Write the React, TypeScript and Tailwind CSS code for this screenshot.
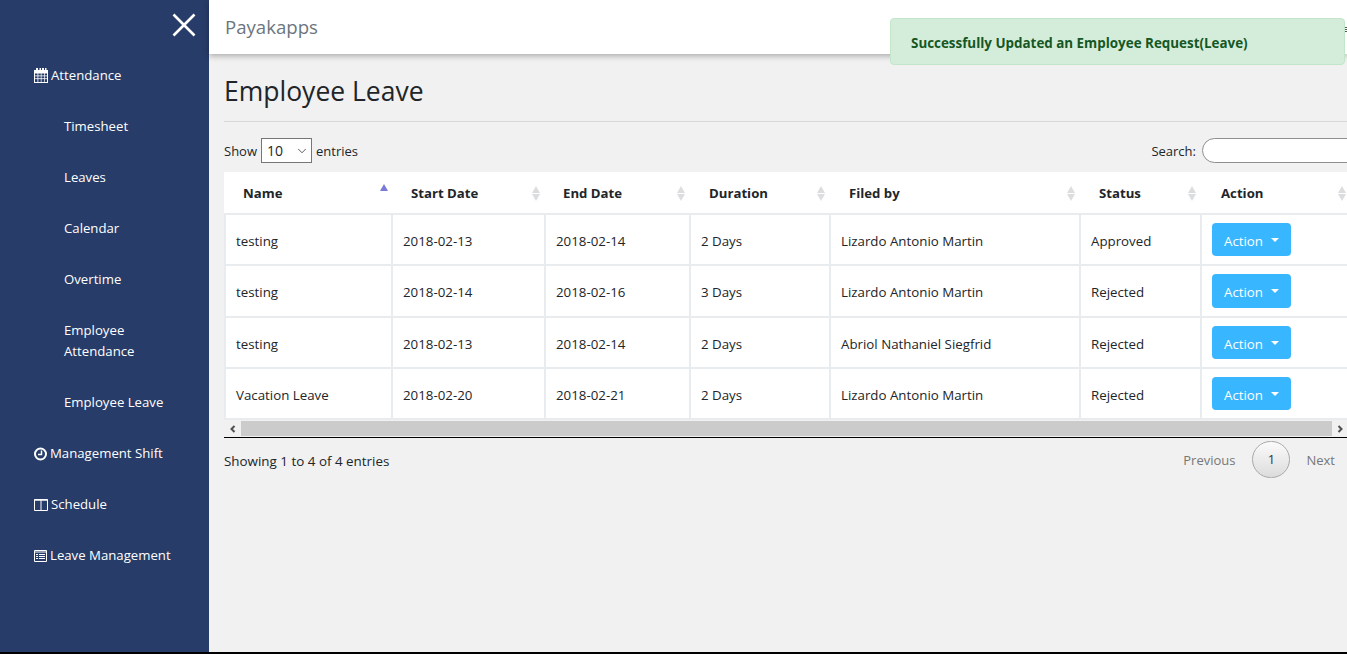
import { ChevronDown } from 'lucide-react';
import type { ReactNode } from 'react';

const FONT = "font-['Open_Sans','Noto_Sans',sans-serif]";

const COLUMNS = [
  { label: 'Name', width: 'w-[167px]', labelClass: 'pl-[18px] pr-[4px]' },
  { label: 'Start Date', width: 'w-[153px]', labelClass: 'pl-[19px] pr-[5px]' },
  { label: 'End Date', width: 'w-[145px]', labelClass: 'pl-[18px] pr-[5px]' },
  { label: 'Duration', width: 'w-[140px]', labelClass: 'pl-[19px] pr-[5px]' },
  { label: 'Filed by', width: 'w-[250px]', labelClass: 'pl-[19px] pr-[5px]' },
  { label: 'Status', width: 'w-[121px]', labelClass: 'pl-[19px] pr-[5px]' },
  { label: 'Action', width: 'w-[150px]', labelClass: 'pl-[20px] pr-[5px]' },
];

const ROWS = [
  { name: 'testing', start: '2018-02-13', end: '2018-02-14', duration: '2 Days', by: 'Lizardo Antonio Martin', status: 'Approved', height: 'h-[51px]', pad: 'pt-[5px]', btn: 'h-[33px]', btnText: 'pt-[5px]' },
  { name: 'testing', start: '2018-02-14', end: '2018-02-16', duration: '3 Days', by: 'Lizardo Antonio Martin', status: 'Rejected', height: 'h-[52px]', pad: 'pt-[3px]', btn: 'h-[34px]', btnText: 'pt-[3px]' },
  { name: 'testing', start: '2018-02-13', end: '2018-02-14', duration: '2 Days', by: 'Abriol Nathaniel Siegfrid', status: 'Rejected', height: 'h-[51px]', pad: 'pt-[5px]', btn: 'h-[33px]', btnText: 'pt-[5px]' },
  { name: 'Vacation Leave', start: '2018-02-20', end: '2018-02-21', duration: '2 Days', by: 'Lizardo Antonio Martin', status: 'Rejected', height: 'h-[51px]', pad: 'pt-[5px]', btn: 'h-[33px]', btnText: 'pt-[5px]' },
];

function CalendarIcon() {
  return (
    <svg width="14" height="15" viewBox="0 0 14 15" className="shrink-0" fill="currentColor">
      <path d="M0 2h2V0h2v2h1.500V0h1.500v2h1V0h2v2h1V0h1.500v2H14v13H0V2z" />
      <g fill="#273c68">
        <rect x="1" y="5.500" width="2.500" height="2" />
        <rect x="4.300" y="5.500" width="2.500" height="2" />
        <rect x="7.500" y="5.500" width="2.500" height="2" />
        <rect x="10.700" y="5.500" width="2.300" height="2" />
        <rect x="1" y="8.300" width="2.500" height="2" />
        <rect x="4.300" y="8.300" width="2.500" height="2" />
        <rect x="7.500" y="8.300" width="2.500" height="2" />
        <rect x="10.700" y="8.300" width="2.300" height="2" />
        <rect x="1" y="11.100" width="2.500" height="2.900" />
        <rect x="4.300" y="11.100" width="2.500" height="2.900" />
        <rect x="7.500" y="11.100" width="2.500" height="2.900" />
        <rect x="10.700" y="11.100" width="2.300" height="2.900" />
      </g>
    </svg>
  );
}

function ClockIcon() {
  return (
    <svg width="13" height="14" viewBox="0 0 13 14" className="shrink-0" fill="none" stroke="currentColor">
      <circle cx="6.500" cy="7" r="5.500" strokeWidth="2" />
      <path d="M7.500 3.500V7.500H4" strokeWidth="1.500" />
    </svg>
  );
}

function ColumnsIcon() {
  return (
    <svg width="14" height="14" viewBox="0 0 14 14" className="shrink-0" fill="none" stroke="currentColor">
      <path d="M0.500 1.500H13.500V12.500H0.500z M7 1.500V12.500" />
      <path d="M0.500 2H13.500" strokeWidth="1.500" />
    </svg>
  );
}

function ListAltIcon() {
  return (
    <svg width="13" height="14" viewBox="0 0 13 14" className="shrink-0" fill="none" stroke="currentColor">
      <path d="M0.500 1.500H12.500V12.500H0.500z" />
      <path d="M1 3H12M2 5.500H4M5 5.500H11M2 7.500H4M5 7.500H11M2 9.500H4M5 9.500H11" />
    </svg>
  );
}

function SortArrows() {
  return (
    <span className="flex flex-col gap-[1px]">
      <span className="h-0 w-0 border-x-[4px] border-b-[7px] border-x-transparent border-b-[#dcdddf]" />
      <span className="h-0 w-0 border-x-[4px] border-t-[7px] border-x-transparent border-t-[#dcdddf]" />
    </span>
  );
}

function NavItem({ icon, children, sub }: { icon?: ReactNode; children: ReactNode; sub?: boolean }) {
  return (
    <a
      className={`flex items-center gap-[3px] py-[15px] leading-[21px] text-white ${sub ? 'pl-[64px] pr-10' : 'pl-[34px]'}`}
    >
      {icon}
      <span>{children}</span>
    </a>
  );
}

export default function App() {
  return (
    <div className={`relative h-[654px] w-[1347px] overflow-hidden bg-black text-[13.3px] text-[#212529] ${FONT}`}>
      <div className="flex h-[652px] bg-[#f1f1f1]">
        <aside className="flex w-[209px] shrink-0 flex-col bg-[#273c68] text-[13.2px] text-white">
          <div className="flex h-[50px] justify-end pr-[13px] pt-[13px]">
            <svg width="24" height="24" viewBox="0 0 24 24" stroke="currentColor" strokeWidth="2.600" fill="none">
              <path d="M1.500 1.500L22.500 22.500M22.500 1.500L1.500 22.500" />
            </svg>
          </div>
          <NavItem icon={<CalendarIcon />}>Attendance</NavItem>
          <NavItem sub>Timesheet</NavItem>
          <NavItem sub>Leaves</NavItem>
          <NavItem sub>Calendar</NavItem>
          <NavItem sub>Overtime</NavItem>
          <NavItem sub>Employee Attendance</NavItem>
          <NavItem sub>Employee Leave</NavItem>
          <NavItem icon={<ClockIcon />}>Management Shift</NavItem>
          <NavItem icon={<ColumnsIcon />}>Schedule</NavItem>
          <NavItem icon={<ListAltIcon />}>Leave Management</NavItem>
        </aside>

        <main className="min-w-0 flex-1">
          <header className="flex h-[54px] items-center justify-between bg-white pl-4 text-[18.6px] text-[#6c757d] shadow-[0_2px_6px_rgba(0,0,0,0.3)]">
            Payakapps
            <span className="mb-[-4px] flex w-[3px] flex-col gap-[1px]">
              <span className="h-px bg-[#555]" />
              <span className="h-px bg-[#555]" />
              <span className="h-px bg-[#555]" />
            </span>
          </header>

          <div className="pl-[15px]">
            <h1 className="mt-[19px] text-[26.5px] leading-[36px] text-[#212529]">Employee Leave</h1>
            <div className="mt-[12px] border-t border-[#d8d8d8]" />

            <div className="mt-[15px] flex h-[27px] items-center justify-between">
              <div className="flex items-center gap-[3px]">
                <span className="pt-[2px] text-[13px]">Show</span>
                <div className="mx-px flex h-[25px] w-[51px] items-center justify-between border border-[#767676] bg-white pl-[5px] pr-[2px] text-[14px]">
                  10
                  <ChevronDown size={14} strokeWidth={1.500} className="text-[#444]" />
                </div>
                <span className="pt-[2px] text-[13px]">entries</span>
              </div>
              <div className="flex items-center gap-[6px]">
                <span className="pt-[2px] text-[13px]">Search:</span>
                <div className="-mr-[20px] h-[25px] w-[165px] rounded-[13px] border border-[#8f8f8f] bg-white" />
              </div>
            </div>

            <div className="mt-[8px] overflow-hidden">
              <table className="w-[1126px] table-fixed border-collapse bg-white">
                <thead>
                  <tr className="h-[42px] border-b-2 border-[#e9ecef]">
                    {COLUMNS.map((col, i) => (
                      <th key={col.label} className={`${col.width} p-0 text-left font-bold`}>
                        <div className={`flex items-center justify-between pt-[2px] ${col.labelClass}`}>
                          <span className="text-[13.2px]">{col.label}</span>
                          {i === 0 ? (
                            <span className="mb-[11px] h-0 w-0 border-x-[4px] border-b-[7px] border-x-transparent border-b-[#7a7ad8]" />
                          ) : (
                            <SortArrows />
                          )}
                        </div>
                      </th>
                    ))}
                  </tr>
                </thead>
                <tbody>
                  {ROWS.map((row, i) => (
                    <tr key={i} className={`${row.height} border-b-2 border-[#e9ecef]`}>
                      <td className={`border-x-2 border-[#e9ecef] pl-[10px] ${row.pad}`}>{row.name}</td>
                      <td className={`border-r-2 border-[#e9ecef] pl-[10px] ${row.pad}`}>{row.start}</td>
                      <td className={`border-r-2 border-[#e9ecef] pl-[10px] ${row.pad}`}>{row.end}</td>
                      <td className={`border-r-2 border-[#e9ecef] pl-[10px] ${row.pad}`}>{row.duration}</td>
                      <td className={`border-r-2 border-[#e9ecef] pl-[10px] ${row.pad}`}>{row.by}</td>
                      <td className={`border-r-2 border-[#e9ecef] pl-[10px] ${row.pad}`}>{row.status}</td>
                      <td className="pl-[10px]">
                        <button
                          type="button"
                          className={`flex w-[79px] items-center justify-center gap-2 rounded-[4px] bg-[#38b6ff] text-white ${row.btn}`}
                        >
                          <span className={row.btnText}>Action</span>
                          <span className="h-0 w-0 border-x-[4px] border-t-[4px] border-x-transparent border-t-white" />
                        </button>
                      </td>
                    </tr>
                  ))}
                </tbody>
              </table>
            </div>

            <div className="flex h-[18px] items-center border-b border-black bg-[#f1f1f1]">
              <div className="flex h-[15px] w-[17px] items-center justify-center">
                <svg width="8" height="8" viewBox="0 0 8 8" fill="none" stroke="#505050" strokeWidth="2">
                  <path d="M5.500 1L2.500 4L5.500 7" />
                </svg>
              </div>
              <div className="h-[15px] flex-1 bg-[#cbcbcb]" />
              <div className="flex h-[15px] w-[15px] items-center justify-center">
                <svg width="8" height="8" viewBox="0 0 8 8" fill="none" stroke="#505050" strokeWidth="2">
                  <path d="M2.500 1L5.500 4L2.500 7" />
                </svg>
              </div>
            </div>

            <div className="flex items-start justify-between pt-[3px]">
              <span className="pt-[10px] text-[13.4px]">Showing 1 to 4 of 4 entries</span>
              <div className="mr-3 flex items-center text-[13px] text-[#777]">
                <span className="pt-[3px]">Previous</span>
                <span className="ml-[17px] flex h-[37px] w-[38px] items-center justify-center rounded-full border border-[#a9a9a9] bg-gradient-to-b from-[#fbfbfb] to-[#dcdcdc] pt-[1px] text-[#333]">
                  1
                </span>
                <span className="ml-[16px] pt-[3px]">Next</span>
              </div>
            </div>
          </div>
        </main>
      </div>

      <div className="absolute left-[890px] top-[18px] flex h-[47px] w-[455px] items-center rounded-[4px] border border-[#c3e6cb] bg-[#d4edda] pl-5 pt-[3px] text-[13.4px] font-bold text-[#155724]">
        Successfully Updated an Employee Request(Leave)
      </div>
    </div>
  );
}
